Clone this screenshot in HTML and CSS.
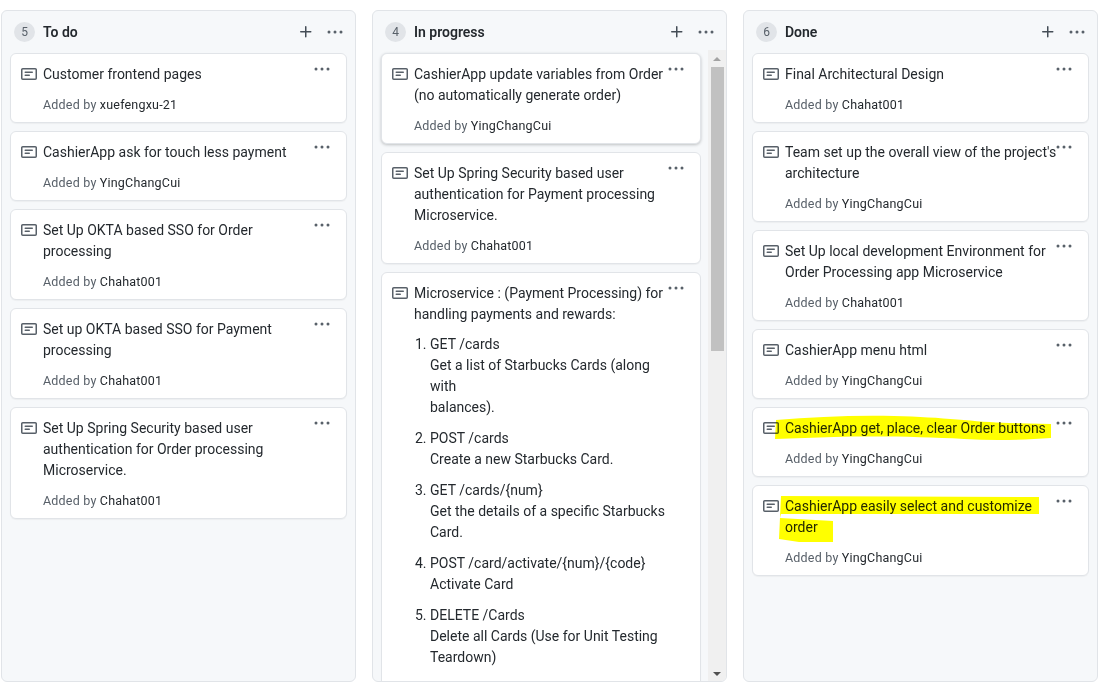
FILE: index.html
```html
<!DOCTYPE html>
<html lang="en">
<head>
<meta charset="utf-8">
<title>Project board</title>
<link rel="stylesheet" href="styles.css">
</head>
<body>
<svg class="defs" width="0" height="0" aria-hidden="true">
  <symbol id="note" viewBox="0 0 16 16"><path fill-rule="evenodd" d="M0 3.75C0 2.784.784 2 1.75 2h12.5c.966 0 1.75.784 1.75 1.75v8.5A1.75 1.75 0 0114.25 14H1.75A1.75 1.75 0 010 12.25v-8.5zm1.75-.25a.25.25 0 00-.25.25v8.5c0 .138.112.25.25.25h12.5a.25.25 0 00.25-.25v-8.5a.25.25 0 00-.25-.25H1.75zM3.5 6.25a.75.75 0 01.75-.75h7a.75.75 0 010 1.5h-7a.75.75 0 01-.75-.75zm.75 2.25a.75.75 0 000 1.5h4a.75.75 0 000-1.5h-4z"/></symbol>
  <symbol id="kebab" viewBox="0 0 16 16"><circle cx="2" cy="8" r="1.5"/><circle cx="8" cy="8" r="1.5"/><circle cx="14" cy="8" r="1.5"/></symbol>
  <symbol id="plus" viewBox="0 0 16 16"><path fill-rule="evenodd" d="M7.75 2a.75.75 0 01.75.75V7h4.25a.75.75 0 110 1.5H8.5v4.25a.75.75 0 11-1.5 0V8.5H2.75a.75.75 0 010-1.5H7V2.75A.75.75 0 017.75 2z"/></symbol>
</svg>
<main class="board">

  <section class="column">
    <header class="column-head">
      <span class="count">5</span><h2 class="column-title">To do</h2>
      <svg class="head-plus"><use href="#plus"/></svg><svg class="head-kebab"><use href="#kebab"/></svg>
    </header>
    <div class="cards">
      <article class="card"><svg class="note"><use href="#note"/></svg><svg class="kebab"><use href="#kebab"/></svg>
        <div class="card-body"><p class="card-title">Customer frontend pages</p><p class="meta">Added by <span class="author">xuefengxu-21</span></p></div></article>
      <article class="card"><svg class="note"><use href="#note"/></svg><svg class="kebab"><use href="#kebab"/></svg>
        <div class="card-body"><p class="card-title">CashierApp ask for touch less payment</p><p class="meta">Added by <span class="author">YingChangCui</span></p></div></article>
      <article class="card"><svg class="note"><use href="#note"/></svg><svg class="kebab"><use href="#kebab"/></svg>
        <div class="card-body"><p class="card-title">Set Up OKTA based SSO for Order<br>processing</p><p class="meta">Added by <span class="author">Chahat001</span></p></div></article>
      <article class="card"><svg class="note"><use href="#note"/></svg><svg class="kebab"><use href="#kebab"/></svg>
        <div class="card-body"><p class="card-title">Set up OKTA based SSO for Payment<br>processing</p><p class="meta">Added by <span class="author">Chahat001</span></p></div></article>
      <article class="card"><svg class="note"><use href="#note"/></svg><svg class="kebab"><use href="#kebab"/></svg>
        <div class="card-body"><p class="card-title">Set Up Spring Security based user<br>authentication for Order processing<br>Microservice.</p><p class="meta">Added by <span class="author">Chahat001</span></p></div></article>
    </div>
  </section>

  <section class="column">
    <header class="column-head">
      <span class="count">4</span><h2 class="column-title">In progress</h2>
      <svg class="head-plus"><use href="#plus"/></svg><svg class="head-kebab"><use href="#kebab"/></svg>
    </header>
    <div class="scroll-area">
      <div class="cards cards-scrolled">
        <article class="card card-hover"><svg class="note"><use href="#note"/></svg><svg class="kebab"><use href="#kebab"/></svg>
          <div class="card-body"><p class="card-title">CashierApp update variables from Order<br>(no automatically generate order)</p><p class="meta">Added by <span class="author">YingChangCui</span></p></div></article>
        <article class="card"><svg class="note"><use href="#note"/></svg><svg class="kebab"><use href="#kebab"/></svg>
          <div class="card-body"><p class="card-title">Set Up Spring Security based user<br>authentication for Payment processing<br>Microservice.</p><p class="meta">Added by <span class="author">Chahat001</span></p></div></article>
        <article class="card"><svg class="note"><use href="#note"/></svg><svg class="kebab"><use href="#kebab"/></svg>
          <div class="card-body"><p class="card-title">Microservice : (Payment Processing) for<br>handling payments and rewards:</p>
            <ol class="steps">
              <li>GET /cards<br>Get a list of Starbucks Cards (along<br>with<br>balances).</li>
              <li>POST /cards<br>Create a new Starbucks Card.</li>
              <li>GET /cards/{num}<br>Get the details of a specific Starbucks<br>Card.</li>
              <li>POST /card/activate/{num}/{code}<br>Activate Card</li>
              <li>DELETE /Cards<br>Delete all Cards (Use for Unit Testing<br>Teardown)</li>
            </ol></div></article>
      </div>
      <div class="scrollbar">
        <span class="arrow-up"></span>
        <span class="thumb"></span>
        <span class="arrow-down"></span>
      </div>
    </div>
  </section>

  <section class="column">
    <header class="column-head">
      <span class="count">6</span><h2 class="column-title">Done</h2>
      <svg class="head-plus"><use href="#plus"/></svg><svg class="head-kebab"><use href="#kebab"/></svg>
    </header>
    <div class="cards">
      <article class="card"><svg class="note"><use href="#note"/></svg><svg class="kebab"><use href="#kebab"/></svg>
        <div class="card-body"><p class="card-title">Final Architectural Design</p><p class="meta">Added by <span class="author">Chahat001</span></p></div></article>
      <article class="card"><svg class="note"><use href="#note"/></svg><svg class="kebab"><use href="#kebab"/></svg>
        <div class="card-body"><p class="card-title">Team set up the overall view of the project's<br>architecture</p><p class="meta">Added by <span class="author">YingChangCui</span></p></div></article>
      <article class="card"><svg class="note"><use href="#note"/></svg><svg class="kebab"><use href="#kebab"/></svg>
        <div class="card-body"><p class="card-title">Set Up local development Environment for<br>Order Processing app Microservice</p><p class="meta">Added by <span class="author">Chahat001</span></p></div></article>
      <article class="card"><svg class="note"><use href="#note"/></svg><svg class="kebab"><use href="#kebab"/></svg>
        <div class="card-body"><p class="card-title">CashierApp menu html</p><p class="meta">Added by <span class="author">YingChangCui</span></p></div></article>
      <article class="card">
        <svg class="marker marker-one" viewBox="0 0 277 26" preserveAspectRatio="none"><path d="M2 5 C40 2 80 0 120 1 C170 2 200 7 235 8 L277 9 L277 23 C250 25 220 26 190 24 C150 22 110 21 60 22 L1 24 Z"/></svg>
        <svg class="note"><use href="#note"/></svg><svg class="kebab"><use href="#kebab"/></svg>
        <div class="card-body"><p class="card-title">CashierApp get, place, clear Order buttons</p><p class="meta">Added by <span class="author">YingChangCui</span></p></div></article>
      <article class="card">
        <svg class="marker marker-two" viewBox="0 0 260 48" preserveAspectRatio="none"><path d="M2 0 L260 1 L260 18 L2 18 L1 22 L54 25 L54 46 L20 46 L0 43 Z"/></svg>
        <svg class="note"><use href="#note"/></svg><svg class="kebab"><use href="#kebab"/></svg>
        <div class="card-body"><p class="card-title">CashierApp easily select and customize<br>order</p><p class="meta">Added by <span class="author">YingChangCui</span></p></div></article>
    </div>
  </section>

</main>
</body>
</html>
```

FILE: styles.css
```css
* { box-sizing: border-box; }

html, body { margin: 0; background: #fff; }

body {
  font-family: Roboto, "Noto Sans", "Liberation Sans", sans-serif;
  color: #24292e;
  overflow: hidden;
  height: 698px;
}

.defs { position: absolute; }

.board {
  display: flex;
  gap: 16px;
  padding: 10px 0 0 1px;
}

.column {
  width: 355px;
  height: 672px;
  flex: none;
  display: flex;
  flex-direction: column;
  background: #f6f8fa;
  border: 1px solid #e1e4e8;
  border-radius: 6px;
  overflow: hidden;
}

.column-head {
  display: flex;
  align-items: center;
  height: 42px;
  flex: none;
  padding: 0 12px 0 12px;
}

.count {
  width: 21px;
  height: 20px;
  border-radius: 50%;
  background: #e1e4e8;
  color: #586069;
  font-size: 12px;
  line-height: 20px;
  text-align: center;
  margin-right: 8px;
}

.column-title {
  margin: 0;
  flex: 1;
  font-size: 14px;
  font-weight: 600;
  line-height: 21px;
}

.head-plus { width: 16px; height: 16px; fill: #444d56; margin-right: 13px; }
.head-kebab { width: 16px; height: 16px; fill: #586069; }

.cards {
  display: flex;
  flex-direction: column;
  gap: 8px;
  padding: 0 8px;
}

.scroll-area {
  flex: 1;
  min-height: 0;
  display: flex;
  overflow: hidden;
  margin-top: -3px;
}

.cards-scrolled {
  width: 336px;
  flex: none;
  padding-top: 3px;
  overflow: hidden;
}

.card {
  position: relative;
  flex: none;
  background: #fff;
  border: 1px solid #e1e4e8;
  border-radius: 6px;
  box-shadow: 0 1px 1px rgba(27, 31, 35, .04);
  padding: 10px 28px 8px 10px;
}

.card-hover {
  box-shadow: 0 1px 3px rgba(27, 31, 35, .25);
}

.note {
  position: absolute;
  left: 10px;
  top: 12px;
  width: 16px;
  height: 16px;
  fill: #586069;
}

.kebab {
  position: absolute;
  right: 16px;
  top: 7px;
  width: 16px;
  height: 16px;
  fill: #586069;
}

.card-body { margin-left: 22px; }

.card-title {
  margin: 0;
  font-size: 14px;
  line-height: 21px;
  white-space: nowrap;
}

.meta {
  margin: 11px 0 0;
  font-size: 12.5px;
  letter-spacing: .2px;
  line-height: 18px;
  color: #586069;
}

.author { color: #24292e; }

.steps {
  margin: 9px 0 0;
  padding-left: 16px;
  font-size: 14px;
  line-height: 21px;
  white-space: nowrap;
}

.steps li { margin-bottom: 10px; }

.scrollbar {
  width: 18px;
  margin-left: -1px;
  flex: none;
  display: flex;
  flex-direction: column;
  align-items: center;
  background: #f0f0f0;
}

.arrow-up, .arrow-down {
  width: 0;
  height: 0;
  border-left: 4px solid transparent;
  border-right: 4px solid transparent;
}

.arrow-up { border-bottom: 4px solid #a3a3a3; margin-top: 7px; }
.arrow-down { border-top: 4px solid #505050; margin-top: auto; margin-bottom: 5px; }

.thumb {
  width: 13px;
  height: 284px;
  background: #c1c1c1;
  margin-top: 6px;
}

.marker {
  position: absolute;
  fill: #ffff00;
  mix-blend-mode: multiply;
  z-index: 1;
}

.marker-one { left: 21px; top: 7px; width: 277px; height: 26px; }
.marker-two { left: 26px; top: 10px; width: 260px; height: 48px; }
```
